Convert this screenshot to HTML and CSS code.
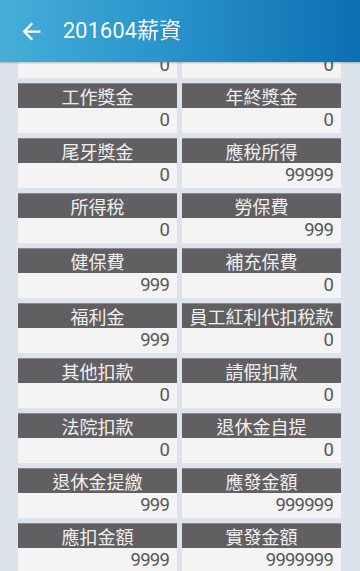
FILE: index.html
```html
<!DOCTYPE html>
<html lang="zh-Hant">
<head>
<meta charset="utf-8">
<title>201604薪資</title>
<link rel="stylesheet" href="styles.css">
</head>
<body>
<header class="appbar">
  <svg class="back" viewBox="0 0 24 24" aria-hidden="true"><path d="M20 11H7.83l5.59-5.59L12 4l-8 8 8 8 1.41-1.41L7.83 13H20v-2z" fill="#fff"/></svg>
  <h1 class="title">201604薪資</h1>
</header>
<main class="grid">
  <div class="item"><div class="label under">加班費</div><div class="value">0</div></div>
  <div class="item"><div class="label under">全勤獎金</div><div class="value">0</div></div>
  <div class="item"><div class="label">工作獎金</div><div class="value">0</div></div>
  <div class="item"><div class="label">年終獎金</div><div class="value">0</div></div>
  <div class="item"><div class="label">尾牙獎金</div><div class="value">0</div></div>
  <div class="item"><div class="label">應稅所得</div><div class="value">99999</div></div>
  <div class="item"><div class="label">所得稅</div><div class="value">0</div></div>
  <div class="item"><div class="label">勞保費</div><div class="value">999</div></div>
  <div class="item"><div class="label">健保費</div><div class="value">999</div></div>
  <div class="item"><div class="label">補充保費</div><div class="value">0</div></div>
  <div class="item"><div class="label">福利金</div><div class="value">999</div></div>
  <div class="item"><div class="label">員工紅利代扣稅款</div><div class="value">0</div></div>
  <div class="item"><div class="label">其他扣款</div><div class="value">0</div></div>
  <div class="item"><div class="label">請假扣款</div><div class="value">0</div></div>
  <div class="item"><div class="label">法院扣款</div><div class="value">0</div></div>
  <div class="item"><div class="label">退休金自提</div><div class="value">0</div></div>
  <div class="item"><div class="label">退休金提繳</div><div class="value">999</div></div>
  <div class="item"><div class="label">應發金額</div><div class="value">999999</div></div>
  <div class="item"><div class="label">應扣金額</div><div class="value">9999</div></div>
  <div class="item"><div class="label">實發金額</div><div class="value">9999999</div></div>
</main>
</body>
</html>
```
FILE: styles.css
```css
html, body {
  margin: 0;
  padding: 0;
  height: 100%;
  overflow: hidden;
}
body {
  background: #dce3ec;
  font-family: Roboto, "Noto Sans CJK TC", sans-serif;
}
.appbar {
  position: fixed;
  top: 0;
  left: 0;
  right: 0;
  height: 62px;
  display: flex;
  align-items: center;
  background: linear-gradient(90deg, #46aed9 0%, #2a94cb 45%, #0c6fb2 100%);
  box-shadow: 0 1px 2px rgba(0, 0, 0, 0.25);
  z-index: 2;
}
.back {
  width: 27px;
  height: 27px;
  margin-left: 18px;
  flex: none;
}
.title {
  margin: 0 0 0 18px;
  color: #fff;
  font-size: 22px;
  font-weight: 400;
  line-height: 1;
  font-family: Roboto, "Noto Sans CJK TC", sans-serif;
}
.grid {
  display: grid;
  grid-template-columns: 1fr 1fr;
  column-gap: 5px;
  row-gap: 5px;
  padding: 28px 19px 0 18px;
}
.item {
  display: flex;
  flex-direction: column;
}
.label {
  height: 24px;
  border-top: 1px solid #8a888c;
  background: #625f63;
  color: #f0f0f0;
  font-family: "Noto Sans CJK TC", sans-serif;
  font-size: 18px;
  line-height: 24px;
  text-align: center;
  white-space: nowrap;
  overflow: hidden;
}
.label.under {
  visibility: hidden;
}
.value {
  height: 25px;
  background: #f4f4f4;
  color: #585858;
  font-size: 18.5px;
  letter-spacing: -0.8px;
  line-height: 25px;
  text-align: right;
  padding-right: 8px;
}
```
